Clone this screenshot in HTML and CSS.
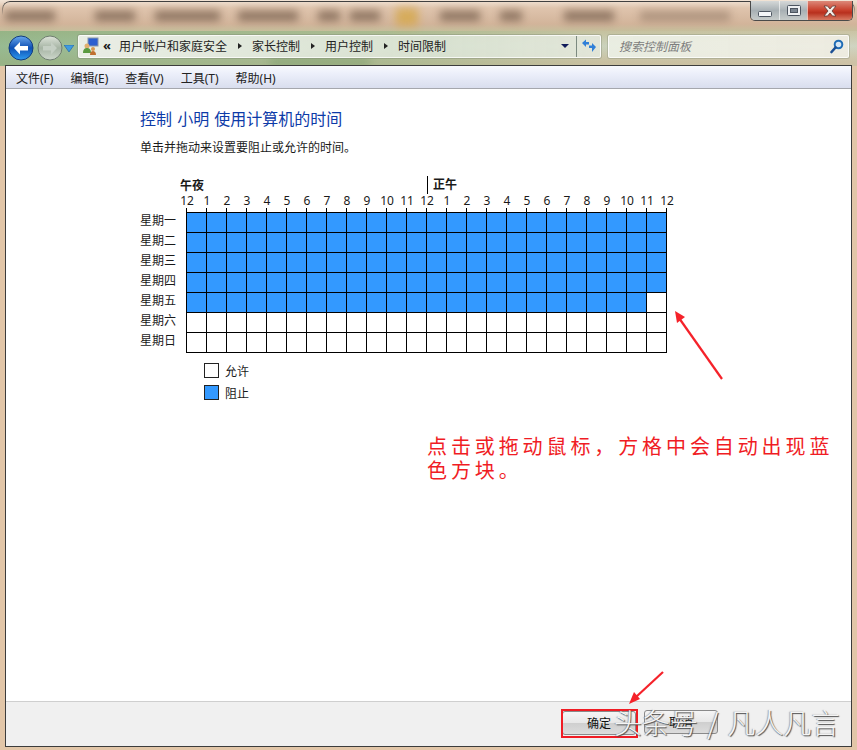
FILE: index.html
```html
<!DOCTYPE html>
<html lang="zh-CN">
<head>
<meta charset="utf-8">
<title>时间限制</title>
<link rel="stylesheet" href="styles.css">
</head>
<body>
<div class="desktop">
  <div class="backdrop">
    <i class="smear s1"></i><i class="smear s2"></i><i class="smear s3"></i><i class="smear s4"></i><i class="smear s5"></i><i class="smear s6"></i><i class="smear s7"></i><i class="smear s8"></i><i class="smear s9"></i><i class="smear s10"></i><i class="smear s11"></i><i class="smear s12"></i>
  </div>

  <div class="window">
    <div class="titlebar">
      <div class="caption">
        <button class="cap cap-min"><svg width="14" height="8" viewBox="0 0 14 8"><rect x="0.5" y="2.5" width="13" height="5" rx="1" fill="#f4f6f8" stroke="#4d5560"/></svg></button>
        <button class="cap cap-max"><svg width="14" height="11" viewBox="0 0 14 11"><rect x="0.5" y="0.5" width="13" height="10" rx="1" fill="#eef0f2" stroke="#4d5560"/><rect x="3.5" y="3.5" width="7" height="4" fill="#7b8590" stroke="#4d5560"/></svg></button>
        <button class="cap cap-close"><svg width="16" height="12" viewBox="0 0 16 12"><path d="M2 1h3.5L8 4l2.500-3H14l-4 5 4 5h-3.500L8 8l-2.500 3H2l4-5z" fill="#f5efe9" stroke="#5b3a36" stroke-width=".8"/></svg></button>
      </div>
    </div>

    <div class="navbar">
      <div class="history">
        <svg class="nav-btn" width="26" height="26" viewBox="0 0 26 26">
          <defs>
            <linearGradient id="backFill" x1="0" y1="0" x2="0" y2="1"><stop offset="0" stop-color="#6aa8ee"/><stop offset=".5" stop-color="#0d4fb4"/><stop offset="1" stop-color="#2f9cf0"/></linearGradient>
            <linearGradient id="fwdFill" x1="0" y1="0" x2="0" y2="1"><stop offset="0" stop-color="#dfe5db"/><stop offset=".5" stop-color="#a6b4a4"/><stop offset="1" stop-color="#ced8cc"/></linearGradient>
          </defs>
          <circle cx="13" cy="13" r="12" fill="url(#backFill)" stroke="#123c7e"/>
          <path d="M6 13l6-6v4h8v4.500h-8v4z" fill="#fff"/>
        </svg>
        <svg class="nav-btn" width="26" height="26" viewBox="0 0 26 26">
          <circle cx="13" cy="13" r="12" fill="url(#fwdFill)" stroke="#6f7d70"/>
          <path d="M20 13l-6-6v4H6v4.500h8v4z" fill="#c5cfc4"/>
        </svg>
        <svg class="nav-drop" width="10" height="7" viewBox="0 0 10 7"><path d="M0 0h10L5 7z" fill="#3f9be0" stroke="#1c5f9e" stroke-width=".6"/></svg>
      </div>

      <div class="address">
        <svg class="cp-icon" width="17" height="18" viewBox="0 0 17 18">
          <rect x="6" y="1" width="10" height="8" fill="#2c5fd0" stroke="#8a96a8"/>
          <circle cx="5" cy="9" r="2.500" fill="#e0b070"/>
          <path d="M1 16c0-4 2-5 4-5s4 1 4 5z" fill="#5a9a40"/>
          <circle cx="11" cy="12" r="2" fill="#d89850"/>
          <path d="M8 18c0-3 1.500-4 3-4s3 1 3 4z" fill="#c07030"/>
        </svg>
        <span class="crumb-more">«</span>
        <span class="crumb">用户帐户和家庭安全</span>
        <span class="crumb-sep"></span>
        <span class="crumb">家长控制</span>
        <span class="crumb-sep"></span>
        <span class="crumb">用户控制</span>
        <span class="crumb-sep"></span>
        <span class="crumb">时间限制</span>
        <span class="address-drop"></span>
        <span class="refresh">
          <svg width="16" height="14" viewBox="0 0 16 14"><path d="M1 4l4-3.500V3h3v2.500H5V8z" fill="#2f7fd8"/><path d="M15 9l-4-4v2.500H8V10h3v4z" fill="#2f7fd8" transform="translate(0 -1)"/></svg>
        </span>
      </div>

      <div class="search">
        <span class="search-text">搜索控制面板</span>
        <svg width="14" height="15" viewBox="0 0 14 15"><circle cx="8.500" cy="5.500" r="3.800" fill="#d6e6f4" stroke="#1f6cb5" stroke-width="2"/><path d="M5.500 8.500L1.500 13" stroke="#1c4f94" stroke-width="2.600" stroke-linecap="round"/></svg>
      </div>
    </div>

    <div class="panel">
      <nav class="menubar">
        <span class="menu-item">文件(F)</span>
        <span class="menu-item">编辑(E)</span>
        <span class="menu-item">查看(V)</span>
        <span class="menu-item">工具(T)</span>
        <span class="menu-item">帮助(H)</span>
      </nav>

      <main class="main">
        <h1 class="heading">控制 小明 使用计算机的时间</h1>
        <p class="intro">单击并拖动来设置要阻止或允许的时间。</p>

        <div class="schedule">
          <div class="periods">
            <span class="period">午夜</span>
            <span class="period period-noon">正午</span>
          </div>
          <div class="hours">
            <span>12</span><span>1</span><span>2</span><span>3</span><span>4</span><span>5</span><span>6</span><span>7</span><span>8</span><span>9</span><span>10</span><span>11</span><span>12</span><span>1</span><span>2</span><span>3</span><span>4</span><span>5</span><span>6</span><span>7</span><span>8</span><span>9</span><span>10</span><span>11</span><span>12</span>
          </div>
          <div class="ticks"></div>
          <div class="day"><span class="day-name">星期一</span><div class="cells blocked"></div></div>
          <div class="day"><span class="day-name">星期二</span><div class="cells blocked"></div></div>
          <div class="day"><span class="day-name">星期三</span><div class="cells blocked"></div></div>
          <div class="day"><span class="day-name">星期四</span><div class="cells blocked"></div></div>
          <div class="day"><span class="day-name">星期五</span><div class="cells blocked-part"></div></div>
          <div class="day"><span class="day-name">星期六</span><div class="cells"></div></div>
          <div class="day day-last"><span class="day-name">星期日</span><div class="cells"></div></div>
        </div>

        <div class="legend">
          <div class="legend-row"><span class="swatch"></span>允许</div>
          <div class="legend-row"><span class="swatch swatch-blocked"></span>阻止</div>
        </div>
      </main>

      <footer class="footer">
        <button class="btn btn-ok">确定</button>
        <button class="btn">取消</button>
      </footer>
    </div>
  </div>

  <svg class="annotations" width="857" height="750" viewBox="0 0 857 750">
    <path d="M722 379L679 318" stroke="#f5222a" stroke-width="2.200" fill="none"/>
    <path d="M675 311l10 6-8 6z" fill="#f5222a"/>
    <path d="M663 672L636 697" stroke="#f5222a" stroke-width="2.200" fill="none"/>
    <path d="M629 704l11-5-6-7z" fill="#f5222a"/>
  </svg>
  <p class="note">点击或拖动鼠标，方格中会自动出现蓝色方块。</p>
  <div class="ok-mark"></div>
  <div class="watermark">头条号 / 凡人凡言</div>
</div>
</body>
</html>
```

FILE: styles.css
```css
* { box-sizing: border-box; }

html, body { margin: 0; padding: 0; }

body {
  font-family: "Noto Sans", "Noto Sans CJK SC", sans-serif;
  font-size: 12px;
  color: #1a1a1a;
  background: #e2c6a8;
}

.desktop {
  position: relative;
  width: 857px;
  height: 750px;
  overflow: hidden;
  background: #e2c6a8;
}

.backdrop {
  position: absolute;
  inset: 0 0 auto 0;
  height: 66px;
  overflow: hidden;
  background:
    linear-gradient(90deg, rgba(130, 175, 125, .7) 0, rgba(150, 182, 135, .55) 45%, rgba(200, 200, 170, .3) 70%, rgba(218, 208, 188, .3) 100%) 0 31px / 100% 35px no-repeat,
    linear-gradient(180deg, #f2e4d6 0, #dfc4ad 8px, #d2b49a 24px, #c4c09c 32px, #cbd6c4 46px, #c9bc9c 62px);
}

.smear {
  position: absolute;
  top: 11px;
  height: 10px;
  background: #7a6250;
  filter: blur(4px);
  opacity: .8;
}
.s1 { left: 5px; width: 50px; }
.s2 { left: 95px; width: 40px; }
.s3 { left: 155px; width: 65px; }
.s4 { left: 238px; width: 60px; }
.s5 { left: 318px; width: 22px; }
.s6 { left: 350px; width: 30px; }
.s7 { left: 396px; width: 22px; top: 8px; height: 18px; background: #d6a84a; }
.s8 { left: 440px; width: 40px; }
.s9 { left: 500px; width: 22px; }
.s10 { left: 564px; width: 50px; }
.s11 { left: 640px; width: 90px; opacity: .45; }
.s12 { left: 270px; top: 60px; width: 100px; height: 4px; background: #6f9560; opacity: .9; }

.window {
  position: relative;
  height: 747px;
  margin: 0 5px 0 5px;
  display: flex;
  flex-direction: column;
}
.window::before {
  content: "";
  position: absolute;
  left: -3px;
  right: -3px;
  top: 1px;
  height: 40px;
  border: 1px solid #3a3a3a;
  border-bottom: 0;
  border-radius: 8px 8px 0 0;
  -webkit-mask-image: linear-gradient(180deg, #000 0, transparent 14px);
  mask-image: linear-gradient(180deg, #000 0, transparent 14px);
}

/* title bar */
.titlebar {
  flex: 0 0 35px;
  display: flex;
  justify-content: flex-end;
  align-items: flex-start;
  padding-top: 1px;
  position: relative;
}
.caption {
  display: flex;
  height: 20px;
  margin-right: -1px;
  border: 1px solid #4a4a4a;
  border-top: 0;
  border-radius: 0 0 5px 5px;
  overflow: hidden;
}
.cap {
  padding: 0;
  border: 0;
  display: flex;
  align-items: center;
  justify-content: center;
  border-left: 1px solid rgba(255, 255, 255, .6);
}
.cap-min {
  width: 28px;
  border-left: 0;
  background: linear-gradient(180deg, #d5d8d8, #a8b0b4 50%, #c6cbca);
}
.cap-min svg { margin-top: 4px; }
.cap-max {
  width: 28px;
  background: linear-gradient(180deg, #d5d8d8, #a8b0b4 50%, #c6cbca);
}
.cap-close {
  width: 45px;
  background: linear-gradient(180deg, #dc8878, #c8402c 48%, #b8301e 62%, #d87a62);
}

/* navigation */
.navbar {
  flex: 0 0 30px;
  display: flex;
  align-items: flex-start;
  position: relative;
}
.history {
  flex: 0 0 73px;
  height: 25px;
  display: flex;
  align-items: center;
  padding-left: 3px;
}
.nav-btn { flex: none; margin-right: 2px; }
.nav-btn + .nav-btn { margin-left: 1px; margin-right: 1px; }
.nav-drop { flex: none; margin-top: 2px; }

.address {
  flex: 0 0 523px;
  height: 23px;
  display: flex;
  align-items: center;
  padding: 0 0 1px 3px;
  background: linear-gradient(90deg, rgba(240, 242, 236, .92), rgba(222, 230, 216, .85) 70%, rgba(228, 232, 220, .9));
  border: 1px solid rgba(255, 255, 255, .75);
  border-radius: 2px;
  box-shadow: 0 0 0 1px rgba(120, 130, 110, .35);
}
.cp-icon { flex: none; margin-right: 4px; }
.crumb-more { font-size: 13px; width: 16px; font-weight: 700; line-height: 1; margin-bottom: 2px; }
.crumb { white-space: nowrap; color: #222; }
.crumb-sep {
  width: 0;
  height: 0;
  margin: 0 10px 0 11px;
  border-left: 4px solid #222;
  border-top: 3.500px solid transparent;
  border-bottom: 3.500px solid transparent;
}
.address-drop {
  margin-left: auto;
  margin-right: 7px;
  width: 0;
  height: 0;
  border-top: 4px solid #111b5a;
  border-left: 4px solid transparent;
  border-right: 4px solid transparent;
}
.refresh {
  flex: 0 0 24px;
  height: 21px;
  border-left: 1px solid #7c8a80;
  display: flex;
  align-items: center;
  justify-content: center;
}

.search {
  flex: 0 0 241px;
  height: 23px;
  margin-left: 7px;
  display: flex;
  align-items: center;
  justify-content: space-between;
  padding: 0 4px 1px 10px;
  background: linear-gradient(90deg, rgba(236, 240, 230, .9), rgba(240, 238, 228, .92));
  border: 1px solid rgba(255, 255, 255, .75);
  border-radius: 2px;
  box-shadow: 0 0 0 1px rgba(120, 130, 110, .3);
}
.search-text { font-style: italic; color: #7d7d7d; }

/* content panel */
.panel {
  flex: 1;
  display: flex;
  flex-direction: column;
  border: 1px solid #3c3c3c;
  background: #fff;
  min-height: 0;
}
.menubar {
  flex: 0 0 23px;
  display: flex;
  align-items: center;
  padding: 1px 0 0 10px;
  gap: 17px;
  background: linear-gradient(180deg, #f8f9fd 0, #eceffa 35%, #d9deee 100%);
  border-bottom: 1px solid #a5a7ad;
}
.menu-item { white-space: nowrap; color: #222; }

.main {
  flex: 1;
  padding: 20px 0 0 134px;
}
.heading {
  margin: 0;
  font-size: 16px;
  font-weight: 400;
  line-height: 20px;
  word-spacing: 1px;
  color: #0d3ba8;
}
.intro {
  margin: 11px 0 0;
  line-height: 16px;
}

.schedule {
  margin-top: 20px;
  width: 530px;
}
.periods {
  display: flex;
  height: 17px;
  padding: 2px 0 0 40px;
  align-items: center;
}
.period { width: 247px; font-weight: 700; line-height: 16px; }
.period-noon {
  width: 31px;
  padding-left: 5px;
  border-left: 1px solid #000;
  height: 18px;
  line-height: 18px;
  margin-top: -2px;
}
.hours {
  display: grid;
  grid-template-columns: repeat(25, 20px);
  height: 15px;
  line-height: 15px;
  margin-left: 37px;
  text-align: center;
}
.ticks {
  height: 4px;
  margin-left: 46px;
  width: 481px;
  background: repeating-linear-gradient(90deg, #000 0 1px, transparent 1px 20px);
}
.day {
  display: flex;
  height: 20px;
}
.day-last { height: 21px; }
.day-name {
  width: 46px;
  line-height: 18px;
  white-space: nowrap;
}
.cells {
  width: 481px;
  border-top: 1px solid #000;
  background: repeating-linear-gradient(90deg, #000 0 1px, transparent 1px 20px);
}
.day-last .cells { border-bottom: 1px solid #000; }
.blocked {
  background:
    repeating-linear-gradient(90deg, #000 0 1px, transparent 1px 20px),
    #3399ff;
}
.blocked-part {
  background:
    repeating-linear-gradient(90deg, #000 0 1px, transparent 1px 20px),
    linear-gradient(90deg, #3399ff 0 461px, #fff 461px);
}

.legend {
  margin: 10px 0 0 64px;
  display: flex;
  flex-direction: column;
  gap: 7px;
}
.legend-row {
  display: flex;
  align-items: center;
  gap: 6px;
  height: 15px;
}
.swatch {
  width: 15px;
  height: 15px;
  border: 1px solid #222;
  background: #fff;
}
.swatch-blocked { background: #3399ff; }

.footer {
  flex: 0 0 45px;
  display: flex;
  justify-content: flex-end;
  align-items: flex-start;
  gap: 8px;
  padding: 8px 133px 0 0;
  background: #f0f0f0;
  border-top: 1px solid #cfcfcf;
}
.btn {
  width: 74px;
  height: 24px;
  padding: 0;
  font: inherit;
  color: #111;
  border: 1px solid #8a8a8a;
  border-radius: 3px;
  background: linear-gradient(180deg, #f5f5f5 0, #e8e8e8 48%, #cfcfcf 52%, #dcdcdc 100%);
}
.btn-ok { margin-top: 1px; }

/* annotations laid over the window */
.annotations {
  position: absolute;
  left: 0;
  top: 0;
  pointer-events: none;
}
.note {
  position: absolute;
  left: 427px;
  top: 434px;
  width: 412px;
  margin: 0;
  font-family: "Noto Sans CJK SC", sans-serif;
  font-size: 20px;
  font-weight: 400;
  line-height: 24px;
  letter-spacing: 3.900px;
  color: #f01c24;
}
.ok-mark {
  position: absolute;
  left: 561px;
  top: 709px;
  width: 77px;
  height: 29px;
  border: 2px solid #f01c24;
}
.watermark {
  position: absolute;
  left: 614px;
  top: 702px;
  white-space: pre;
  font-family: "Noto Sans CJK SC", sans-serif;
  font-size: 28px;
  font-weight: 300;
  line-height: 40px;
  word-spacing: 3px;
  color: rgba(255, 255, 255, .92);
  text-shadow: 1px 1px 1px #4d4d4d, -1px 0 1px rgba(90, 90, 90, .5);
}
```
